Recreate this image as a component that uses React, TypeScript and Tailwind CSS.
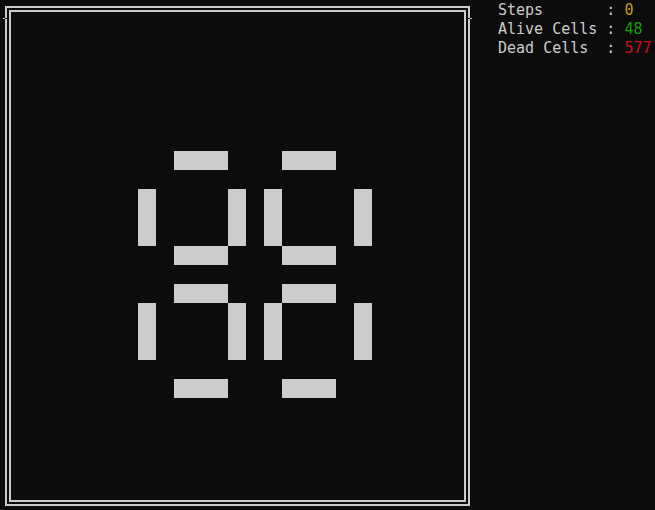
import React from "react";

const ALIVE = new Set<string>();
const hRows = [7, 12, 14, 19];
const hCols = [9, 10, 11, 15, 16, 17];
const vRows = [9, 10, 11, 15, 16, 17];
const vCols = [7, 12, 14, 19];
hRows.forEach((r) => hCols.forEach((c) => ALIVE.add(`${r}-${c}`)));
vRows.forEach((r) => vCols.forEach((c) => ALIVE.add(`${r}-${c}`)));

export default function App() {
  const cells: React.ReactNode[] = [];
  for (let r = 0; r < 25; r++) {
    for (let c = 0; c < 25; c++) {
      const alive = ALIVE.has(`${r}-${c}`);
      cells.push(
        <div key={`${r}-${c}`} className={alive ? "bg-[#cccccc]" : ""} />
      );
    }
  }
  return (
    <div
      className="w-[655px] h-[510px] bg-[#0c0c0c] flex items-start overflow-hidden text-[#cccccc]"
      style={{ fontFamily: '"DejaVu Sans Mono", "Liberation Mono", monospace' }}
    >
      <div className="relative ml-[5px] mt-[6px] w-[465px] h-[500px] border-2 border-[#cccccc] p-[2px]">
        <div className="w-full h-full border-2 border-[#cccccc] pl-[1px] pt-[6px]">
          <div className="grid grid-cols-[repeat(25,18px)] grid-rows-[repeat(25,19px)]">
            {cells}
          </div>
        </div>
        <div className="absolute left-[-2px] top-[10px] w-[2px] h-[1px] bg-[#0c0c0c]" />
        <div className="absolute left-[-4px] top-[10px] w-[2px] h-[1px] bg-[#cccccc]" />
        <div className="absolute right-[-2px] top-[10px] w-[2px] h-[1px] bg-[#0c0c0c]" />
        <div className="absolute right-[-4px] top-[10px] w-[2px] h-[1px] bg-[#cccccc]" />
      </div>
      <div className="ml-[28px] mt-[1px] text-[15px] leading-[19px] whitespace-pre">
        <div>
          Steps       : <span className="text-[#c19c00]">0</span>
        </div>
        <div>
          Alive Cells : <span className="text-[#13a10e]">48</span>
        </div>
        <div>
          Dead Cells  : <span className="text-[#c50f1f]">577</span>
        </div>
      </div>
    </div>
  );
}
